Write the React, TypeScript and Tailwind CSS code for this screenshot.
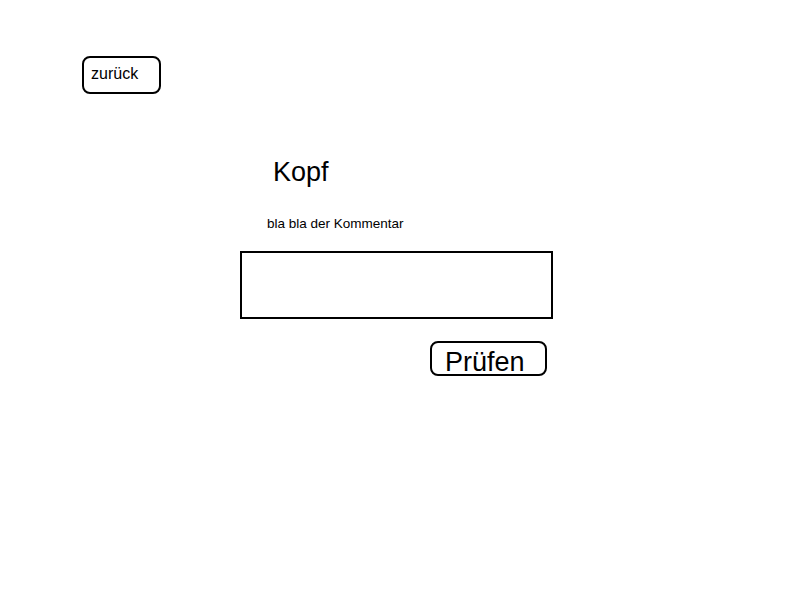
const App = () => {
  return (
    <div className="min-h-screen bg-white text-black font-['Liberation_Sans',Arial,sans-serif]">
      <div className="pt-[56px] pl-[82px]">
        <button className="block w-[79px] h-[38px] border-2 border-black rounded-[8px] text-left pl-[7px] pt-[7px] pb-[9px] text-[16px] leading-[18px]">
          zurück
        </button>
      </div>

      <div className="ml-[240px] flex flex-col items-start">
        <h1 className="mt-[63px] ml-[33px] text-[27px] leading-[30px] font-normal">Kopf</h1>
        <p className="mt-[29px] ml-[27px] text-[13.5px] leading-[15px]">bla bla der Kommentar</p>
        <textarea className="mt-[20px] block w-[313px] h-[68px] border-2 border-black resize-none outline-none" />
        <button className="mt-[22px] ml-[190px] flex items-start w-[117px] h-[35px] border-2 border-black rounded-[8px] pl-[13px] pt-[4px] text-[27px] leading-[30px]">
          Prüfen
        </button>
      </div>
    </div>
  )
}

export default App
